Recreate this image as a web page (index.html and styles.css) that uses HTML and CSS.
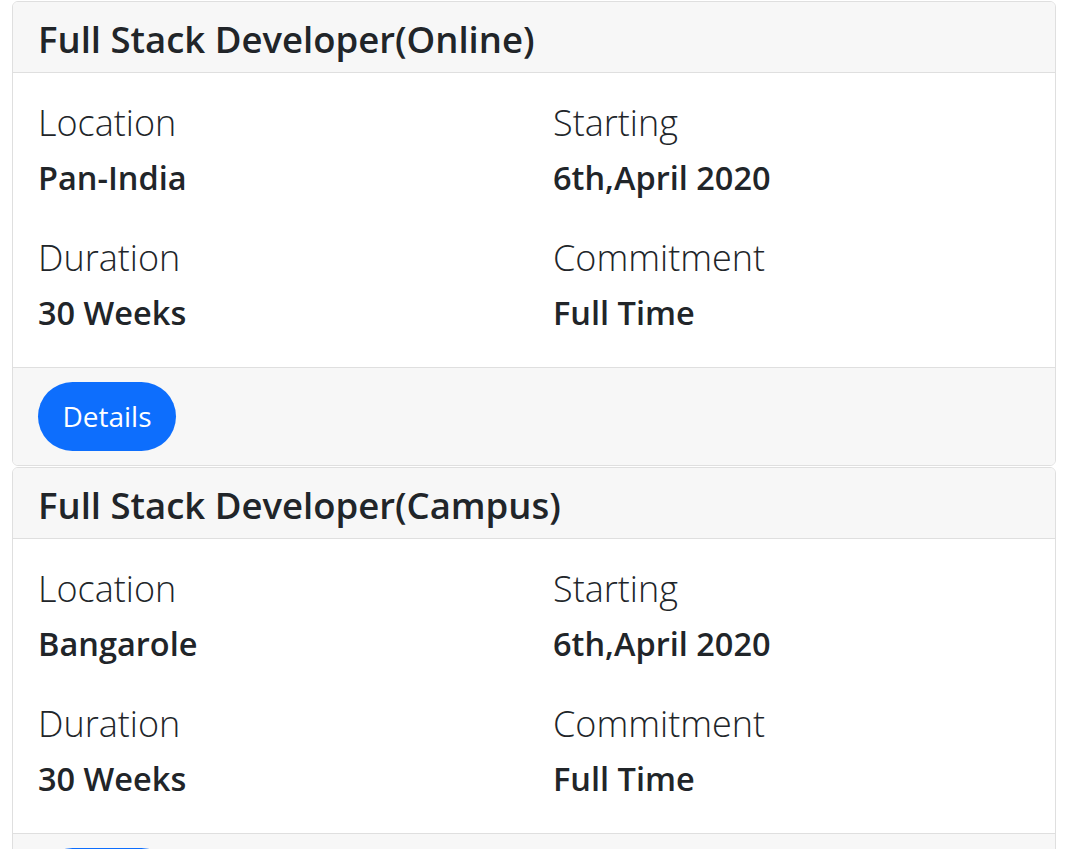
FILE: index.html
```html
<!DOCTYPE html>
<html lang="en">
<head>
<meta charset="utf-8">
<title>Courses</title>
<link rel="stylesheet" href="styles.css">
</head>
<body>
<div class="list">
  <div class="card">
    <div class="card-header"><h4 class="title">Full Stack Developer(Online)</h4></div>
    <div class="card-body">
      <div class="item"><p class="label">Location</p><p class="value">Pan-India</p></div>
      <div class="item"><p class="label">Starting</p><p class="value">6th,April 2020</p></div>
      <div class="item"><p class="label">Duration</p><p class="value">30 Weeks</p></div>
      <div class="item"><p class="label">Commitment</p><p class="value">Full Time</p></div>
    </div>
    <div class="card-footer"><button class="btn">Details</button></div>
  </div>
  <div class="card">
    <div class="card-header"><h4 class="title">Full Stack Developer(Campus)</h4></div>
    <div class="card-body">
      <div class="item"><p class="label">Location</p><p class="value">Bangarole</p></div>
      <div class="item"><p class="label">Starting</p><p class="value">6th,April 2020</p></div>
      <div class="item"><p class="label">Duration</p><p class="value">30 Weeks</p></div>
      <div class="item"><p class="label">Commitment</p><p class="value">Full Time</p></div>
    </div>
    <div class="card-footer"><button class="btn">Details</button></div>
  </div>
</div>
</body>
</html>
```
FILE: styles.css
```css
html, body {
  margin: 0;
  padding: 0;
  background: #ffffff;
}
body {
  font-family: "Open Sans", "Noto Sans", "Liberation Sans", sans-serif;
  color: #212529;
  overflow: hidden;
}
.list {
  padding: 1px 19px 0 12px;
  display: flex;
  flex-direction: column;
  gap: 1px;
}
.card {
  border: 1px solid #dfdfdf;
  border-radius: 6px;
  background: #fff;
  overflow: hidden;
}
.card-header {
  background: #f7f7f7;
  border-bottom: 1px solid #dfdfdf;
  padding: 14px 25px 10px;
}
.title {
  margin: 0;
  font-size: 36.5px;
  line-height: 46px;
  font-weight: 600;
}
.card-body {
  padding: 26px 25px 34px;
  display: grid;
  grid-template-columns: 1fr 1fr;
  column-gap: 38px;
  row-gap: 36px;
}
.label {
  margin: 0 0 11px;
  font-size: 36px;
  line-height: 48px;
  font-weight: 300;
}
.value {
  margin: 0;
  font-size: 32.5px;
  line-height: 40px;
  font-weight: 600;
}
.card-footer {
  background: #f7f7f7;
  border-top: 1px solid #dfdfdf;
  padding: 14px 25px;
}
.btn {
  display: block;
  width: 138px;
  height: 69px;
  border: 0;
  border-radius: 35px;
  background: #0d6efd;
  color: #fff;
  font-family: inherit;
  font-size: 28px;
  line-height: 69px;
  padding: 0;
  text-align: center;
}
```
